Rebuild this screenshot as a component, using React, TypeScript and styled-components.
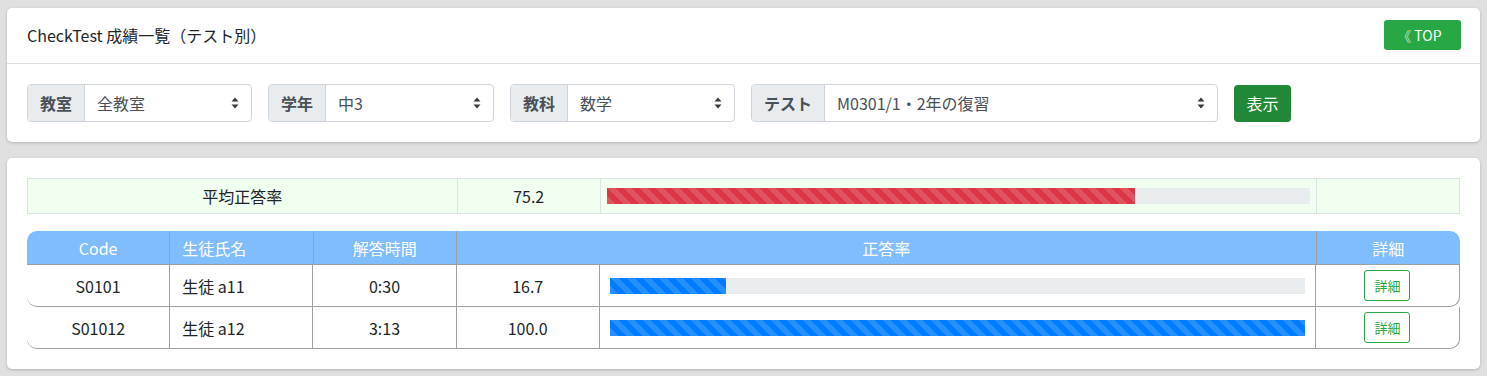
import { FC } from "react";
import styled, { createGlobalStyle, css } from "styled-components";

const GlobalStyle = createGlobalStyle`
  body {
    margin: 0;
    background-color: #e0e0e0;
    font-family: "Noto Sans CJK JP", "Noto Sans", sans-serif;
    color: #212529;
  }
`;

interface Student {
  code: string;
  name: string;
  time: string;
  rate: number;
}

const students: Student[] = [
  { code: "S0101", name: "生徒 a11", time: "0:30", rate: 16.7 },
  { code: "S01012", name: "生徒 a12", time: "3:13", rate: 100.0 },
];

const filters = [
  { label: "教室", value: "全教室", width: 225 },
  { label: "学年", value: "中3", width: 226 },
  { label: "教科", value: "数学", width: 225 },
  { label: "テスト", value: "M0301/1・2年の復習", width: 467 },
];

const SortCaret: FC = () => (
  <svg width="8" height="12" viewBox="0 0 8 12">
    <path d="M4 0.5 L7.5 4.5 H0.5 Z" fill="#343a40" />
    <path d="M4 11.5 L7.5 7.5 H0.5 Z" fill="#343a40" />
  </svg>
);

const App: FC = () => {
  return (
    <Page>
      <GlobalStyle />

      <Card>
        <CardHeader>
          <Title>CheckTest 成績一覧（テスト別）</Title>
          <TopButton>
            <Chevron>《</Chevron>TOP
          </TopButton>
        </CardHeader>
        <CardBody>
          <Filters>
            {filters.map((f) => (
              <InputGroup key={f.label} width={f.width}>
                <GroupLabel>{f.label}</GroupLabel>
                <SelectBox>
                  <span>{f.value}</span>
                  <SortCaret />
                </SelectBox>
              </InputGroup>
            ))}
            <ShowButton>表示</ShowButton>
          </Filters>
        </CardBody>
      </Card>

      <Card>
        <CardBody>
          <Summary>
            <SummaryCell span={3}>平均正答率</SummaryCell>
            <SummaryCell>75.2</SummaryCell>
            <SummaryCell padding={6}>
              <Progress>
                <Bar color="#dc3545" style={{ width: "75.2%" }} />
              </Progress>
            </SummaryCell>
            <SummaryCell />
          </Summary>

          <Table>
            <HeadRow>
              <HeadCell>Code</HeadCell>
              <HeadCell align="left">生徒氏名</HeadCell>
              <HeadCell>解答時間</HeadCell>
              <HeadCell span={2}>正答率</HeadCell>
              <HeadCell>詳細</HeadCell>
            </HeadRow>
            {students.map((s) => (
              <Row key={s.code}>
                <Cell>{s.code}</Cell>
                <Cell align="left">{s.name}</Cell>
                <Cell>{s.time}</Cell>
                <Cell>{s.rate.toFixed(1)}</Cell>
                <Cell padding={10}>
                  <Progress>
                    <Bar color="#007bff" style={{ width: `${s.rate}%` }} />
                  </Progress>
                </Cell>
                <Cell>
                  <DetailButton>詳細</DetailButton>
                </Cell>
              </Row>
            ))}
          </Table>
        </CardBody>
      </Card>
    </Page>
  );
};

const Page = styled.div`
  padding: 8px 7px;
  display: flex;
  flex-direction: column;
  gap: 16px;
`;

const Card = styled.div`
  background: #fff;
  border-radius: 5px;
  box-shadow: 0 1px 3px rgba(0, 0, 0, 0.22);
`;

const CardHeader = styled.div`
  padding: 12px 19px 13px 20px;
  display: flex;
  align-items: center;
  justify-content: space-between;
  border-bottom: 1px solid #dcdfe3;
`;

const Title = styled.span`
  font-size: 16px;
  line-height: 24px;
`;

const TopButton = styled.button`
  width: 77px;
  height: 30px;
  padding: 0 6px 0 0;
  display: flex;
  align-items: center;
  justify-content: center;
  gap: 3px;
  border: none;
  border-radius: 3px;
  background-color: #28a745;
  color: #fff;
  font-family: inherit;
  font-size: 14px;
`;

const Chevron = styled.span`
  font-weight: 300;
  opacity: 0.9;
`;

const CardBody = styled.div`
  padding: 20px;
`;

const Filters = styled.div`
  display: flex;
  align-items: center;
  gap: 16px;
`;

const InputGroup = styled.div<{ width: number }>`
  display: flex;
  height: 38px;
  width: ${({ width }) => width}px;
  border: 1px solid #ced4da;
  border-radius: 4px;
  box-sizing: border-box;
  overflow: hidden;
`;

const GroupLabel = styled.div`
  padding: 0 12px;
  display: flex;
  align-items: center;
  background-color: #e9ecef;
  border-right: 1px solid #ced4da;
  font-size: 16px;
  font-weight: 700;
  color: #495057;
`;

const SelectBox = styled.div`
  flex: 1;
  padding: 0 12px;
  display: flex;
  align-items: center;
  justify-content: space-between;
  font-size: 16px;
  color: #495057;
`;

const ShowButton = styled.button`
  width: 57px;
  height: 37px;
  border: none;
  border-radius: 4px;
  background-color: #218838;
  color: #fff;
  font-family: inherit;
  font-size: 16px;
`;

const Summary = styled.div`
  display: grid;
  grid-template-columns: repeat(4, 1fr) 5fr 1fr;
  background-color: #f0fff0;
  border-top: 1px solid #dee2e6;
  border-left: 1px solid #dee2e6;
`;

const SummaryCell = styled.div<{ span?: number; padding?: number }>`
  grid-column: span ${({ span }) => span ?? 1};
  height: 34px;
  padding: 0 ${({ padding }) => padding ?? 0}px;
  display: flex;
  align-items: center;
  justify-content: center;
  border-right: 1px solid #dee2e6;
  border-bottom: 1px solid #dee2e6;
  font-size: 16px;
`;

const Progress = styled.div`
  flex: 1;
  height: 16px;
  background-color: #e9ecef;
  display: flex;
`;

const Bar = styled.div<{ color: string }>`
  height: 100%;
  background-color: ${({ color }) => color};
  background-image: linear-gradient(
    45deg,
    rgba(255, 255, 255, 0.15) 25%,
    transparent 25%,
    transparent 50%,
    rgba(255, 255, 255, 0.15) 50%,
    rgba(255, 255, 255, 0.15) 75%,
    transparent 75%,
    transparent
  );
  background-size: 16px 16px;
`;

const Table = styled.div`
  margin-top: 17px;
`;

const rowGrid = css`
  display: grid;
  grid-template-columns: repeat(4, 1fr) 5fr 1fr;
`;

const HeadRow = styled.div`
  ${rowGrid}
  background-color: #80bdff;
  border-radius: 10px 10px 0 0;
  border-bottom: 1px solid #9e9e9e;
`;

const HeadCell = styled.div<{ span?: number; align?: string }>`
  grid-column: span ${({ span }) => span ?? 1};
  height: 33px;
  padding: 0 12px;
  display: flex;
  align-items: center;
  justify-content: ${({ align }) => (align === "left" ? "flex-start" : "center")};
  color: #fff;
  font-size: 16px;
  border-right: 1px solid #9e9e9e;

  &:last-child {
    border-right: none;
  }
`;

const Row = styled.div`
  ${rowGrid}
  border-bottom: 1px solid #a0a0a0;
  border-right: 1px solid #a0a0a0;
  border-radius: 0 0 10px 10px;
`;

const Cell = styled.div<{ align?: string; padding?: number }>`
  height: 41px;
  padding: 0 ${({ padding }) => padding ?? 12}px;
  display: flex;
  align-items: center;
  justify-content: ${({ align }) => (align === "left" ? "flex-start" : "center")};
  font-size: 16px;
  border-right: 1px solid #a0a0a0;

  &:last-child {
    border-right: none;
  }
`;

const DetailButton = styled.button`
  width: 46px;
  height: 31px;
  padding: 0;
  background: #fff;
  border: 1px solid #28a745;
  border-radius: 3px;
  color: #28a745;
  font-family: inherit;
  font-size: 13px;
`;

export default App;
